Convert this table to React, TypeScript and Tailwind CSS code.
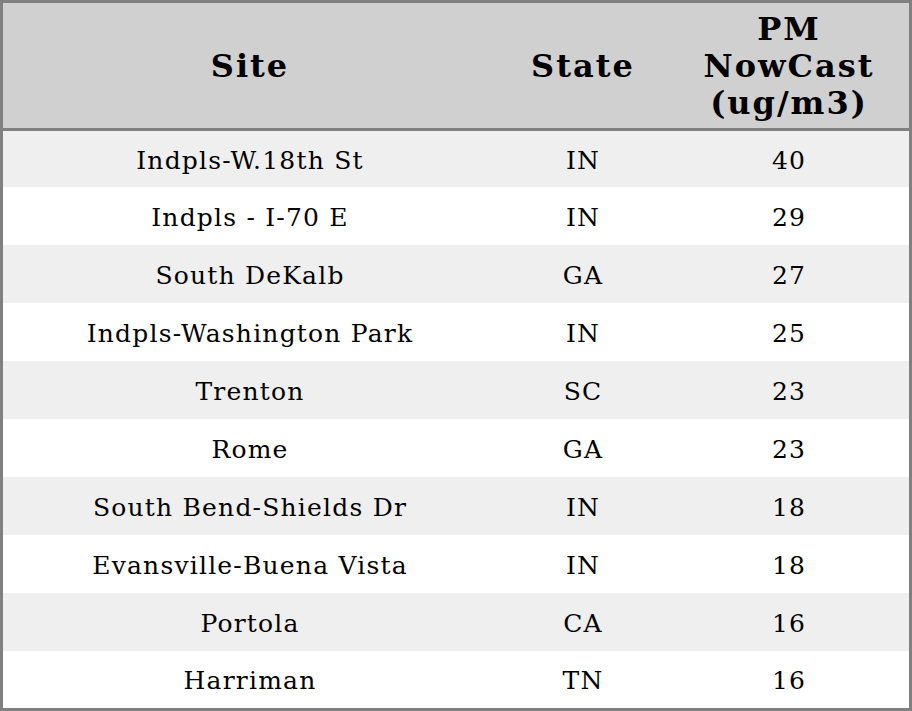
const rows: [string, string, number][] = [
  ["Indpls-W.18th St", "IN", 40],
  ["Indpls - I-70 E", "IN", 29],
  ["South DeKalb", "GA", 27],
  ["Indpls-Washington Park", "IN", 25],
  ["Trenton", "SC", 23],
  ["Rome", "GA", 23],
  ["South Bend-Shields Dr", "IN", 18],
  ["Evansville-Buena Vista", "IN", 18],
  ["Portola", "CA", 16],
  ["Harriman", "TN", 16],
];

export default function App() {
  return (
    <div className="flex h-[711px] w-[912px] flex-col border-[3px] border-[#808080] bg-white font-['DejaVu_Serif',serif] text-black">
      <div className="flex h-[128px] shrink-0 border-b-[3px] border-[#808080] bg-[#d0d0d0] text-[32px] font-bold leading-[37px] tracking-[2px]">
        <div className="flex w-[494px] items-center justify-center pt-[2px]">Site</div>
        <div className="flex w-[172px] items-center justify-center pt-[2px]">State</div>
        <div className="flex w-[240px] items-center justify-center pt-[1px] text-center">
          PM
          <br />
          NowCast
          <br />
          (ug/m3)
        </div>
      </div>
      {rows.map(([site, state, value], i) => (
        <div
          key={site}
          className={`flex shrink-0 text-[25px] tracking-[1.2px] ${
            i === 0 ? "h-[56px]" : i === rows.length - 1 ? "h-[57px]" : "h-[58px]"
          } ${i % 2 === 0 ? "bg-[#efefef]" : "bg-white"}`}
        >
          <div className="flex w-[494px] items-center justify-center pt-[3px]">{site}</div>
          <div className="flex w-[172px] items-center justify-center pt-[3px]">{state}</div>
          <div className="flex w-[240px] items-center justify-center pt-[3px]">{value}</div>
        </div>
      ))}
    </div>
  );
}
